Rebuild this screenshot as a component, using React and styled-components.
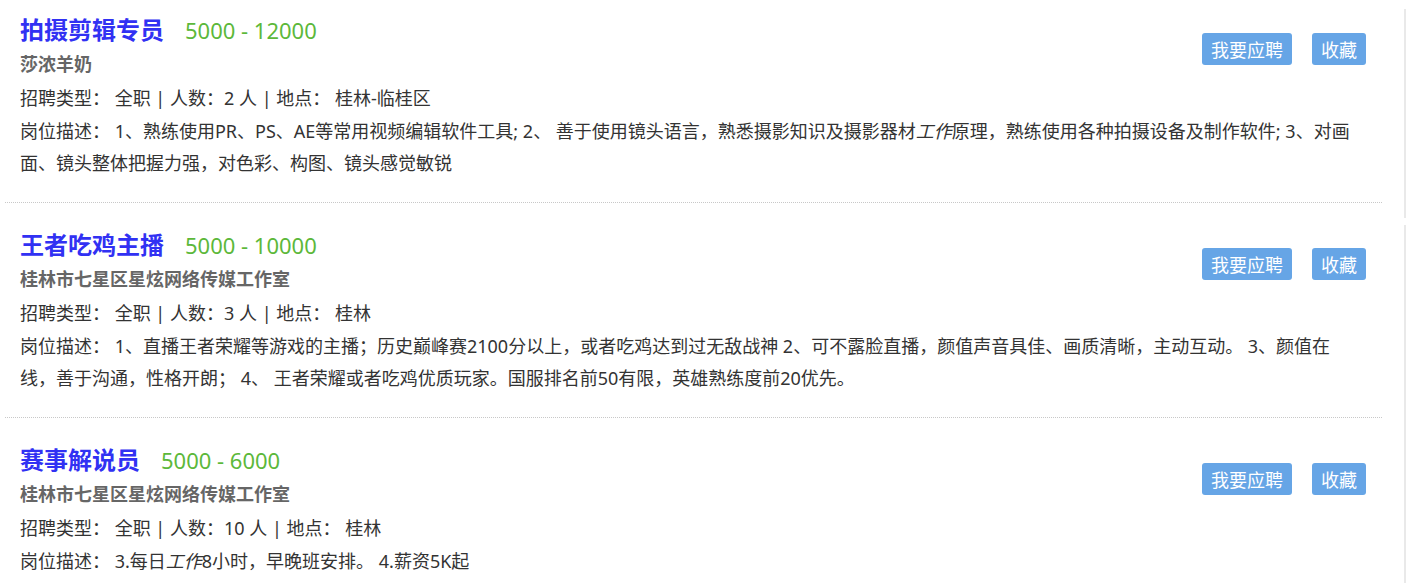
import React from "react";
import styled, { createGlobalStyle } from "styled-components";

const Global = createGlobalStyle`
  html, body { margin: 0; padding: 0; background: #fff; }
  body {
    font-family: "Noto Sans", "Noto Sans CJK SC", sans-serif;
    color: #333;
  }
`;

const Page = styled.div`
  display: flex;
  align-items: stretch;
`;

const List = styled.div`
  width: 1377px;
  margin-left: 5px;
  flex: none;
`;

const Rail = styled.div`
  display: flex;
  flex-direction: column;
  gap: 7px;
  margin-left: 22px;
  padding-top: 9px;
  width: 2px;
`;

const RailSegment = styled.div`
  background: #e9e9e9;
  width: 2px;
  height: ${(p) => (p.$h ? `${p.$h}px` : "auto")};
  flex: ${(p) => (p.$h ? "none" : "1")};
`;

const Item = styled.div`
  padding: 25px 16px 23px 15px;
  border-bottom: 1px dotted #c8c8c8;
  &:first-child {
    padding-top: 13px;
  }
`;

const Header = styled.div`
  display: flex;
  justify-content: space-between;
  align-items: flex-start;
`;

const HeadLeft = styled.div`
  display: flex;
  flex-direction: column;
`;

const TitleRow = styled.div`
  display: flex;
  align-items: baseline;
  height: 34px;
  line-height: 34px;
`;

const Title = styled.span`
  font-size: 24px;
  font-weight: bold;
  color: #3131f3;
`;

const Salary = styled.span`
  font-size: 22px;
  color: #5cb83a;
  margin-left: 21px;
`;

const Company = styled.div`
  font-size: 18px;
  font-weight: bold;
  color: #666;
  line-height: 35px;
`;

const Actions = styled.div`
  display: flex;
  gap: 20px;
  margin-top: 20px;
`;

const Btn = styled.button`
  border: none;
  border-radius: 3px;
  background: #66a5e6;
  color: #fff;
  font-family: "Noto Sans CJK SC", sans-serif;
  font-size: 18px;
  height: 32px;
  line-height: 32px;
  padding: 0 9px;
  cursor: pointer;
`;

const Info = styled.div`
  font-size: 18px;
  line-height: 33px;
  color: #333;
`;

const Desc = styled.div`
  font-size: 18px;
  line-height: 32px;
  color: #333;
  margin-right: 14px;
`;

const Em = styled.i`
  font-style: italic;
`;

const jobs = [
  {
    title: "拍摄剪辑专员",
    salary: "5000 - 12000",
    company: "莎浓羊奶",
    count: 2,
    place: "桂林-临桂区",
    desc: (
      <>
        1、熟练使用PR、PS、AE等常用视频编辑软件工具; 2、 善于使用镜头语言，熟悉摄影知识及摄影器材<Em>工作</Em>原理，熟练使用各种拍摄设备及制作软件; 3、对画面、镜头整体把握力强，对色彩、构图、镜头感觉敏锐
      </>
    ),
  },
  {
    title: "王者吃鸡主播",
    salary: "5000 - 10000",
    company: "桂林市七星区星炫网络传媒工作室",
    count: 3,
    place: "桂林",
    desc: (
      <>
        1、直播王者荣耀等游戏的主播；历史巅峰赛2100分以上，或者吃鸡达到过无敌战神 2、可不露脸直播，颜值声音具佳、画质清晰，主动互动。 3、颜值在线，善于沟通，性格开朗； 4、 王者荣耀或者吃鸡优质玩家。国服排名前50有限，英雄熟练度前20优先。
      </>
    ),
  },
  {
    title: "赛事解说员",
    salary: "5000 - 6000",
    company: "桂林市七星区星炫网络传媒工作室",
    count: 10,
    place: "桂林",
    desc: (
      <>
        3.每日<Em>工作</Em>8小时，早晚班安排。 4.薪资5K起
      </>
    ),
  },
];

function JobItem({ job }) {
  return (
    <Item>
      <Header>
        <HeadLeft>
          <TitleRow>
            <Title>{job.title}</Title>
            <Salary>{job.salary}</Salary>
          </TitleRow>
          <Company>{job.company}</Company>
        </HeadLeft>
        <Actions>
          <Btn>我要应聘</Btn>
          <Btn>收藏</Btn>
        </Actions>
      </Header>
      <Info>
        招聘类型： 全职 | 人数：{job.count} 人 | 地点： {job.place}
      </Info>
      <Desc>岗位描述： {job.desc}</Desc>
    </Item>
  );
}

export default function App() {
  return (
    <>
      <Global />
      <Page>
        <List>
          {jobs.map((j) => (
            <JobItem key={j.title} job={j} />
          ))}
        </List>
        <Rail>
          <RailSegment $h={209} />
          <RailSegment />
        </Rail>
      </Page>
    </>
  );
}
